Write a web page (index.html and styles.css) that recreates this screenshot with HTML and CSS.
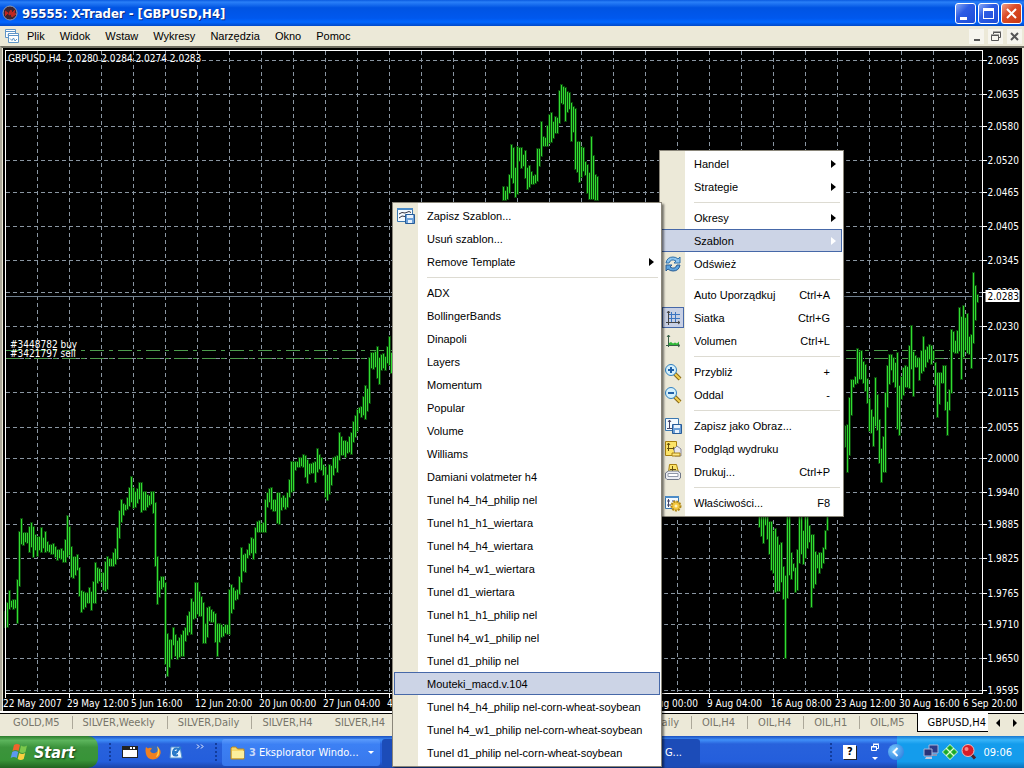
FILE: index.html
```
<!DOCTYPE html>
<html lang="pl">
<head>
    <meta charset="UTF-8">
    <meta name="viewport" content="width=device-width, initial-scale=1.0">
    <title>95555: X-Trader - [GBPUSD,H4]</title>
    <link rel="stylesheet" href="styles.css">
</head>
<body>
    <div class="desktop">
        <!-- Title bar -->
        <header class="titlebar">
            <svg class="app-icon" width="16" height="16" viewBox="0 0 16 16">
                <circle cx="8" cy="8" r="7" fill="#3c2430" stroke="#8c9cb8"/>
                <path d="M3 6l3 2-3 3M7 8l2-3 1 3 3-3-1 3 2 1-4 3-1-3-2 1z" fill="#c02820" stroke="#c02820"/>
            </svg>
            <h1>95555: X-Trader - [GBPUSD,H4]</h1>
            <div class="window-buttons">
                <button type="button" aria-label="Minimalizuj"><svg width="19" height="19"><path d="M4 13h7v3H4z" fill="#fff"/></svg></button>
                <button type="button" aria-label="Maksymalizuj"><svg width="19" height="19"><path d="M4 4h11v11H4zM5 7v7h9V7z" fill="#fff" fill-rule="evenodd"/></svg></button>
                <button type="button" class="close" aria-label="Zamknij"><svg width="19" height="19"><path d="M5 5l9 9M14 5l-9 9" stroke="#fff" stroke-width="2"/></svg></button>
            </div>
        </header>

        <!-- Menu bar -->
        <nav class="menubar">
            <svg class="doc-icon" width="15" height="15" viewBox="0 0 15 15" fill="#fff" stroke="#5f95c8">
                <path d="M.5.5h10v8H.5zM.5 2.500h10"/>
                <path d="M2.500 6l2-1.500 2 1" fill="none"/>
                <path d="M3.500 4.500h10v9h-10zM3.500 6.500h10"/>
                <path d="M5 9.500l2 2 1.500-2.500 1.500 3 2-2" fill="none"/>
            </svg>
            <button type="button">Plik</button>
            <button type="button">Widok</button>
            <button type="button">Wstaw</button>
            <button type="button">Wykresy</button>
            <button type="button">Narzędzia</button>
            <button type="button">Okno</button>
            <button type="button">Pomoc</button>
            <div class="mdi-buttons">
                <button type="button" aria-label="Minimalizuj wykres"><svg width="15" height="15"><path d="M5 10h6v2H5z" fill="#555"/></svg></button>
                <button type="button" aria-label="Przywróć wykres"><svg width="15" height="15" fill="none" stroke="#555"><path d="M5.500 5V3.500h7v5H11M5 3h8M3.500 6.500h7v5h-7zM3 6h8"/></svg></button>
                <button type="button" aria-label="Zamknij wykres"><svg width="15" height="15"><path d="M4 4l7 7M11 4l-7 7" stroke="#555" stroke-width="2"/></svg></button>
            </div>
        </nav>

        <!-- Chart -->
        <main class="chart">
            <svg id="chart"></svg>
        </main>

        <!-- Chart tabs -->
        <div class="tabs">
            <div class="tab-group">
                <button type="button">GOLD,M5</button>
                <button type="button">SILVER,Weekly</button>
                <button type="button">SILVER,Daily</button>
                <button type="button">SILVER,H4</button>
                <button type="button">SILVER,H4</button>
            </div>
            <div class="tab-group">
                <button type="button">OIL,Daily</button>
                <button type="button">OIL,H4</button>
                <button type="button">OIL,H4</button>
                <button type="button">OIL,H1</button>
                <button type="button">OIL,M5</button>
                <button type="button" class="active">GBPUSD,H4</button>
            </div>
            <div class="tab-scroll">
                <button type="button" aria-label="W lewo"><svg width="6" height="8"><path d="M5 0v8L1 4z"/></svg></button>
                <button type="button" aria-label="W prawo"><svg width="6" height="8"><path d="M1 0v8l4-4z"/></svg></button>
            </div>
        </div>

        <!-- Taskbar -->
        <footer class="taskbar">
            <button type="button" class="start">
                <svg width="20" height="18" viewBox="0 0 20 18">
                    <path d="M4 2q3-2 6 0L8.500 8q-3-2-6 0z" fill="#f0642c"/>
                    <path d="M11 2.500q3 2 6 0L15.500 9q-3 2-6 0z" fill="#7cc84c"/>
                    <path d="M2.200 9q3-2 6 0L6.700 15q-3-2-6 0z" fill="#5c98f0"/>
                    <path d="M9.200 10q3 2 6 0l-1.500 6q-3 2-6 0z" fill="#fcd040"/>
                </svg>
                <span>Start</span>
            </button>
            <span class="grip"></span>
            <div class="quick">
                <button type="button" aria-label="Okno"><svg width="16" height="16"><path d="M0 2h16v12H0z" fill="#222"/><path d="M1 6h14v7H1z" fill="#fff"/><path d="M8 3h2v2H8zM11 3h2v2h-2z" fill="#fff"/></svg></button>
                <button type="button" aria-label="Firefox">
                    <svg width="16" height="16" viewBox="0 0 16 16">
                        <circle cx="8.500" cy="7.500" r="6" fill="#3468c0"/>
                        <path d="M1 3l2 1.500Q5 3 7 4.500L5 7q2 3 5 2 4-1 3-6 4 4 2 8-2 4-7 4.500Q2 15 1 10 0 6 1 3z" fill="#f08020"/>
                        <path d="M12 2q3 3 2 7 0 3-3 4 3-5 1-11z" fill="#fcd048"/>
                    </svg>
                </button>
                <button type="button" aria-label="Outlook Express">
                    <svg width="16" height="16" viewBox="0 0 16 16">
                        <path d="M3 3h9l2 11H2z" fill="#e8f4ff" stroke="#5090d0"/>
                        <path d="M11 5q-5-2-6 3t5 3M6 11l7-8M6 8h4" fill="none" stroke="#2878c8" stroke-width="2"/>
                    </svg>
                </button>
            </div>
            <button type="button" class="more" aria-label="Więcej"><svg width="8" height="6" fill="none" stroke="#fff"><path d="M1 .5l2 2-2 2M5 .5l2 2-2 2"/></svg></button>
            <span class="grip"></span>
            <div class="tasks">
                <button type="button" class="task">
                    <svg width="16" height="14" viewBox="0 0 16 14"><path d="M1 2l1-1h4l1.500 2H14v10H1z" fill="#f8d868" stroke="#b88820"/><path d="M2 5h12v7H2z" fill="#fcee9c"/></svg>
                    <span class="count">3</span>
                    <span class="label">Eksplorator Windo...</span>
                    <svg width="6" height="4"><path d="M0 0h6L3 3z" fill="#fff"/></svg>
                </button>
                <button type="button" class="task pressed">
                    <svg width="16" height="16"><circle cx="8" cy="8" r="6" fill="#c06838"/></svg>
                    <span class="label">X-Trader - G...</span>
                </button>
            </div>
            <span class="grip"></span>
            <div class="language">
                <button type="button" class="help" aria-label="Pomoc">?</button>
                <svg width="10" height="18" fill="none" stroke="#fff"><path d="M3.500 3V1.500h5v4H7M3 1h6M1.500 3.500h5v4h-5zM1 4h6"/><path d="M2 14h6l-3 3z" fill="#fff" stroke="none"/></svg>
            </div>
            <div class="tray">
                <button type="button" class="tray-toggle" aria-label="Pokaż ukryte ikony"><svg width="16" height="16" fill="none" stroke="#fff" stroke-width="2"><path d="M9.500 4l-4 4 4 4"/></svg></button>
                <svg width="16" height="16" viewBox="0 0 16 16">
                    <path d="M6 1h9v8H6z" fill="#2c3c88" stroke="#a8b4d8"/><path d="M8 10h6v2H8z" fill="#8894b8"/>
                    <path d="M1 5h8v7H1z" fill="#283478" stroke="#a8b4d8"/><path d="M3 13h6v2H2z" fill="#c0c8dc"/>
                </svg>
                <svg width="16" height="16" viewBox="0 0 16 16">
                    <path d="M8 0l8 8-8 8-8-8z" fill="#d8ffd0"/>
                    <path d="M8 1.500l2.500 2.500L8 6.500 5.500 4zM12 5.500L14.500 8 12 10.500 9.500 8zM4 5.500L6.500 8 4 10.500 1.500 8zM8 9.500l2.500 2.500L8 14.500 5.500 12z" fill="#18a828" stroke="#18a828"/>
                </svg>
                <svg width="16" height="16" viewBox="0 0 16 16">
                    <path d="M10 10l4 4.500" stroke="#502028" stroke-width="3"/>
                    <circle cx="7" cy="6.500" r="6" fill="#d81c28" stroke="#f0b8b8"/>
                    <circle cx="5.500" cy="5" r="2" fill="#f88888"/>
                </svg>
                <time>09:06</time>
            </div>
        </footer>

        <!-- Chart context menu -->
        <ul class="menu context">
            <li><button type="button"><i></i><span>Handel</span><b class="arrow"></b></button></li>
            <li><button type="button"><i></i><span>Strategie</span><b class="arrow"></b></button></li>
            <li class="sep"></li>
            <li><button type="button"><i></i><span>Okresy</span><b class="arrow"></b></button></li>
            <li><button type="button" class="selected"><i></i><span>Szablon</span><b class="arrow"></b></button></li>
            <li><button type="button"><i><svg width="18" height="18" viewBox="0 0 18 18">
                <path d="M2 8q1-6 7-6 3 0 5 2l2-2v6H10l2-2Q7 3 5 8z" fill="#8cc4f0" stroke="#3070a8"/>
                <path d="M16 10q-1 6-7 6-3 0-5-2l-2 2v-6h6l-2 2q5 3 7-2z" fill="#5ca4e0" stroke="#285c94"/>
            </svg></i><span>Odśwież</span></button></li>
            <li class="sep"></li>
            <li><button type="button"><i></i><span>Auto Uporządkuj</span><kbd>Ctrl+A</kbd></button></li>
            <li><button type="button"><i class="checked"><svg width="18" height="18" viewBox="0 0 18 18" fill="none">
                <path d="M7.500 3v10M11.500 3v10M4 5.500h12M4 9.500h12" stroke="#3c74c0"/>
                <path d="M4.500 2v14M2 13.500h14M3 4l1.500-2L6 4M14 12l2 1.500-2 1.500" stroke="#444"/>
            </svg></i><span>Siatka</span><kbd>Ctrl+G</kbd></button></li>
            <li><button type="button"><i><svg width="18" height="18" viewBox="0 0 18 18">
                <path d="M5 13v-2l2-1 2 1.500 2-1 2 1 2-2v3.500z" fill="#30b838"/>
                <path d="M4.500 3v12M2 13.500h13M3 5l1.500-2L6 5M14 12l2 1.500-2 1.500" fill="none" stroke="#386048"/>
            </svg></i><span>Volumen</span><kbd>Ctrl+L</kbd></button></li>
            <li class="sep"></li>
            <li><button type="button"><i><svg width="18" height="18" viewBox="0 0 18 18">
                <path d="M10 10l6 6" stroke="#886818" stroke-width="4"/><path d="M11 11l5 5" stroke="#f4d050" stroke-width="2"/>
                <circle cx="7" cy="7" r="5.500" fill="#d4f0fc" stroke="#3080c0"/><path d="M4 7h6M7 4v6" stroke="#2060a8" stroke-width="2"/>
            </svg></i><span>Przybliż</span><kbd>+</kbd></button></li>
            <li><button type="button"><i><svg width="18" height="18" viewBox="0 0 18 18">
                <path d="M10 10l6 6" stroke="#886818" stroke-width="4"/><path d="M11 11l5 5" stroke="#f4d050" stroke-width="2"/>
                <circle cx="7" cy="7" r="5.500" fill="#d4f0fc" stroke="#3080c0"/><path d="M4 7h6" stroke="#2060a8" stroke-width="2"/>
            </svg></i><span>Oddal</span><kbd>-</kbd></button></li>
            <li class="sep"></li>
            <li><button type="button"><i><svg width="18" height="18" viewBox="0 0 18 18">
                <path d="M1.500 1.500h13v12h-13z" fill="#f4faff" stroke="#3c78b0"/>
                <path d="M5.500 3v9M4 5l1.500-2L7 5M3 11.500h5" fill="none" stroke="#446"/>
                <path d="M8.500 7.500h9v9h-9z" fill="#6ca0d8" stroke="#285c98"/><path d="M10 8h6v3h-6zM11 13h4v3h-4z" fill="#e8f2fc"/>
            </svg></i><span>Zapisz jako Obraz...</span></button></li>
            <li><button type="button"><i><svg width="18" height="18" viewBox="0 0 18 18">
                <path d="M1.500 1.500h11v14h-11z" fill="#fce468" stroke="#a88010"/>
                <path d="M4.500 3v8M3 8.500h8M3 5l1.500-2L6 5M9 7l2 1.500L9 10" fill="none" stroke="#665010"/>
                <path d="M10 9l3-3 4 3v7h-6z" fill="#e8e8f0" stroke="#888898"/><path d="M8 13h8v3H8z" fill="#fce888" stroke="#a88010"/>
            </svg></i><span>Podgląd wydruku</span></button></li>
            <li><button type="button"><i><svg width="18" height="18" viewBox="0 0 18 18">
                <path d="M5.500 1.500h7l2 8h-10z" fill="#fce468" stroke="#a88010"/><path d="M8.500 3v5M6 6.500h6" stroke="#665010"/>
                <path d="M1.500 10l3-2h9l3 2v5l-2 1.500H3L1.500 15z" fill="#eceef4" stroke="#707888"/><path d="M4 10.500h10v3H4z" fill="#fff" stroke="#9098a8"/>
            </svg></i><span>Drukuj...</span><kbd>Ctrl+P</kbd></button></li>
            <li class="sep"></li>
            <li><button type="button"><i><svg width="18" height="18" viewBox="0 0 18 18">
                <path d="M1.500 2.500h13v12h-13z" fill="#f4faff" stroke="#3c78b0"/><path d="M1 2h14v2H1z" fill="#4c8cc8"/>
                <path d="M4.500 5v8M3 7h3M3 11h4M8 7h3" stroke="#446"/>
                <circle cx="12" cy="12" r="4.500" fill="#f4c840" stroke="#b08818" stroke-width="2" stroke-dasharray="2 1"/><circle cx="12" cy="12" r="1.500" fill="#fff4c0"/>
            </svg></i><span>Właściwości...</span><kbd>F8</kbd></button></li>
        </ul>

        <!-- Template submenu -->
        <ul class="menu templates">
            <li><button type="button"><i><svg width="18" height="18" viewBox="0 0 18 18">
                <path d="M.5 1.500h15v13H.5z" fill="#f4faff" stroke="#3c78b0"/><path d="M0 1h16v2H0z" fill="#4c8cc8"/>
                <path d="M2 7l3-1.500L8 6l4-1.500 2 1M2 11l3-2 3 .5" fill="none" stroke="#334"/>
                <path d="M8.500 7.500h9v9h-9z" fill="#6ca0d8" stroke="#285c98"/><path d="M10 8h6v3h-6zM11 13h4v3h-4z" fill="#e8f2fc"/>
            </svg></i><span>Zapisz Szablon...</span></button></li>
            <li><button type="button"><i></i><span>Usuń szablon...</span></button></li>
            <li><button type="button"><i></i><span>Remove Template</span><b class="arrow"></b></button></li>
            <li class="sep"></li>
            <li><button type="button"><i></i><span>ADX</span></button></li>
            <li><button type="button"><i></i><span>BollingerBands</span></button></li>
            <li><button type="button"><i></i><span>Dinapoli</span></button></li>
            <li><button type="button"><i></i><span>Layers</span></button></li>
            <li><button type="button"><i></i><span>Momentum</span></button></li>
            <li><button type="button"><i></i><span>Popular</span></button></li>
            <li><button type="button"><i></i><span>Volume</span></button></li>
            <li><button type="button"><i></i><span>Williams</span></button></li>
            <li><button type="button"><i></i><span>Damiani volatmeter h4</span></button></li>
            <li><button type="button"><i></i><span>Tunel h4_h4_philip nel</span></button></li>
            <li><button type="button"><i></i><span>Tunel h1_h1_wiertara</span></button></li>
            <li><button type="button"><i></i><span>Tunel h4_h4_wiertara</span></button></li>
            <li><button type="button"><i></i><span>Tunel h4_w1_wiertara</span></button></li>
            <li><button type="button"><i></i><span>Tunel d1_wiertara</span></button></li>
            <li><button type="button"><i></i><span>Tunel h1_h1_philip nel</span></button></li>
            <li><button type="button"><i></i><span>Tunel h4_w1_philip nel</span></button></li>
            <li><button type="button"><i></i><span>Tunel d1_philip nel</span></button></li>
            <li><button type="button" class="selected"><i></i><span>Mouteki_macd.v.104</span></button></li>
            <li><button type="button"><i></i><span>Tunel h4_h4_philip nel-corn-wheat-soybean</span></button></li>
            <li><button type="button"><i></i><span>Tunel h4_w1_philip nel-corn-wheat-soybean</span></button></li>
            <li><button type="button"><i></i><span>Tunel d1_philip nel-corn-wheat-soybean</span></button></li>
        </ul>
    </div>

    <script src="chart.js"></script>
</body>
</html>
```

FILE: styles.css
```
* {
    box-sizing: border-box;
}
body {
    margin: 0;
    font-family: "Liberation Sans", Arial, sans-serif;
    font-size: 11px;
    color: #000;
    background-color: #ece9d8;
}
button {
    margin: 0;
    padding: 0;
    border: 0;
    background: none;
    font: inherit;
    color: inherit;
    white-space: nowrap;
}
svg {
    display: block;
    flex-shrink: 0;
}
.desktop {
    position: relative;
    display: flex;
    flex-direction: column;
    height: 100vh;
    overflow: hidden;
}

/* Title bar */
.titlebar {
    display: flex;
    align-items: center;
    gap: 4px;
    height: 26px;
    padding: 0 2px;
    background: linear-gradient(#0a5ae0, #2a80f8 8%, #0054e3 30%, #0058ee 70%, #0066ff 85%, #0048c8);
}
.titlebar h1 {
    flex: 1;
    margin: 0;
    font-family: "DejaVu Sans Condensed", "DejaVu Sans", sans-serif;
    font-size: 13px;
    font-weight: bold;
    color: #fff;
    text-shadow: 1px 1px #0a2a80;
}
.window-buttons {
    display: flex;
    gap: 2px;
}
.window-buttons button {
    width: 21px;
    height: 21px;
    border: 1px solid #fff;
    border-radius: 3px;
    background: linear-gradient(135deg, #88a8f4, #2c5ce4 40%, #1c4cd8);
}
.window-buttons .close {
    background: linear-gradient(135deg, #f0a088, #dc4c28 40%, #c83810);
}

/* Menu bar */
.menubar {
    display: flex;
    align-items: center;
    gap: 15px;
    height: 20px;
    padding: 0 2px 0 5px;
    background: #ece9d8;
}
.doc-icon {
    margin-right: -8px;
}
.mdi-buttons {
    display: flex;
    gap: 4px;
    margin-left: auto;
}
.mdi-buttons button {
    background: #f6f5ee;
}

/* Chart */
.chart {
    flex: 1;
    min-height: 0;
    padding: 0 2px 0 1px;
    border-top: 2px solid #716f64;
    border-left: 2px solid #aca899;
    background: #ece9d8;
}
.chart svg {
    width: 100%;
    height: 100%;
    background: #000;
    font-family: "DejaVu Sans Condensed", "DejaVu Sans", sans-serif;
    font-size: 10px;
}
.chart text {
    fill: #fff;
}
.grid {
    stroke: #8a96a2;
    stroke-dasharray: 4 3;
}
.frame {
    fill: none;
    stroke: #fff;
}
.bars {
    fill: #32dc32;
    stroke: #0a460a;
    stroke-width: 2px;
    paint-order: stroke;
}
.orders {
    stroke: #4c9c4c;
    stroke-dasharray: 14 5 4 5;
}
.price-line {
    stroke: #70808f;
}
.price-tag {
    fill: #fff;
}
.chart .price-now {
    fill: #000;
}

/* Tabs */
.tabs {
    display: flex;
    justify-content: space-between;
    height: 25px;
    padding: 0 6px 4px 3px;
    border-top: 2px solid #fff;
    background: #ece9d8;
    box-shadow: inset 0 1px #000;
    font-family: "DejaVu Sans Condensed", "DejaVu Sans", sans-serif;
    color: #77756a;
}
.tab-group {
    display: flex;
    align-items: center;
}
.tab-group:nth-child(2) {
    margin-left: auto;
}
.tab-group button {
    padding: 0 12px 0 10px;
    border-right: 1px solid #aca899;
}
.tab-group button:nth-last-child(2) {
    border-right: 0;
}
.tab-group .active {
    align-self: stretch;
    padding: 0 2px 0 10px;
    border: 1px solid #000;
    border-top: 0;
    border-right: 0;
    background: #fff;
    color: #000;
}
.tab-scroll {
    display: flex;
    align-items: center;
    gap: 11px;
    padding-left: 7px;
}

/* Taskbar */
.taskbar {
    display: flex;
    align-items: stretch;
    height: 32px;
    background: linear-gradient(#1c50c0, #4090f8 12%, #2862dc 25%, #245edc 80%, #1c44a8);
    font-family: "DejaVu Sans Condensed", "DejaVu Sans", sans-serif;
    color: #fff;
}
.start {
    display: flex;
    align-items: center;
    gap: 4px;
    width: 98px;
    padding-left: 10px;
    border-radius: 0 10px 10px 0;
    background: linear-gradient(#2c7c2c, #5cb45c 14%, #3c943c 35%, #389438 75%, #206420);
    font-size: 16px;
    font-weight: bold;
    font-style: italic;
    text-shadow: 1px 1px 2px #143814;
}
.grip {
    width: 4px;
    margin: 6px 10px;
    background: radial-gradient(circle, #123c9c 1px, transparent 1px) 0 0 / 4px 4px;
}
.quick {
    display: flex;
    align-items: center;
    gap: 7px;
}
.more {
    margin-left: 12px;
    padding-top: 8px;
    align-self: flex-start;
}
.tasks {
    display: flex;
    flex: 1;
    gap: 2px;
    padding: 3px 0 2px;
}
.grip + .tasks {
    margin-left: -6px;
}
.task {
    display: flex;
    align-items: center;
    gap: 3px;
    width: 158px;
    padding: 0 6px 0 8px;
    border-radius: 3px;
    background: linear-gradient(#5c9cfc, #3c80f4 20%, #3878ec);
}
.task .count {
    font-weight: bold;
    color: #c8d8f8;
}
.task .label {
    flex: 1;
    text-align: left;
}
.pressed {
    flex: 1;
    max-width: 318px;
    background: #1c4cb8;
}
.pressed .label {
    text-align: right;
    padding-right: 12px;
}
.language {
    display: flex;
    align-items: center;
    gap: 14px;
    padding-right: 8px;
}
.help {
    width: 13px;
    height: 14px;
    background: #fff;
    box-shadow: 1px 1px #222;
    font-weight: bold;
    line-height: 14px;
    color: #000;
}
.tray {
    display: flex;
    align-items: center;
    gap: 3px;
    padding-right: 12px;
    background: linear-gradient(#1878d0, #38b4f8 12%, #149cec 25%, #149cec 80%, #0c70b8);
    background-position: 9px 0;
    background-repeat: no-repeat;
}
.tray time {
    margin-left: 3px;
}
.tray-toggle {
    margin-right: 16px;
    border-radius: 50%;
    background: radial-gradient(circle at 35% 35%, #78c8fc, #2070d8);
}

/* Popup menus */
.menu {
    position: absolute;
    margin: 0;
    padding: 1px 1px 2px;
    list-style: none;
    border: 1px solid #8a867a;
    background: linear-gradient(90deg, #ece9d8 25px, #fff 25px);
    box-shadow: 2px 2px 2px rgba(0, 0, 0, 0.5);
}
.menu button {
    display: flex;
    align-items: center;
    width: 100%;
    height: 23px;
    border: 1px solid transparent;
    text-align: left;
}
.menu i {
    display: flex;
    align-items: center;
    justify-content: center;
    flex-shrink: 0;
    width: 22px;
    height: 21px;
    margin-right: 10px;
}
.menu i.checked {
    border: 1px solid #4668a8;
    background: #c8d0e4;
}
.menu span {
    flex: 1;
}
.menu kbd {
    margin-right: 11px;
    font: inherit;
}
.menu .sep {
    height: 1px;
    margin: 4px 2px 3px 33px;
    background: #dddbd2;
}
.menu .selected {
    border-color: #4668a8;
    background: #ccd4e6;
}
.arrow {
    margin-right: 5px;
    border: 4px solid transparent;
    border-right: 0;
    border-left: 5px solid #000;
}
.selected .arrow {
    border-left-color: #fff;
}
.context {
    top: 150px;
    left: 659px;
    width: 185px;
}
.templates {
    top: 202px;
    left: 392px;
    width: 270px;
}
```

FILE: chart.js
```
// Bars are [first slot, base offset, [high, low, high, low, ...]],
// one slot is 2px wide, values are in thirds of a pixel below the base
const runs = [
    [0, 272, [
        875,922, 850,920, 813,868, 843,862, 841,866, 841,865, 780,908, 635,798, 598,672, 640,675,
        640,665, 638,668, 620,697, 608,680, 620,710, 645,690, 650,708, 652,690, 625,695, 655,685,
        637,697, 665,693, 675,697, 675,703, 672,702, 680,712, 690,720, 690,715, 687,717, 692,727,
        660,727, 588,710, 620,705, 682,770, 710,775, 712,765, 706,750, 745,828, 812,876, 816,866,
        818,862, 818,850, 803,850, 815,870, 785,848, 728,848, 743,790, 748,782, 758,785, 758,810,
        725,813, 712,808, 718,738, 718,738, 700,738, 688,732, 625,718, 573,655, 540,605, 552,585,
        555,570, 535,567, 505,557, 472,545, 505,565, 515,560, 507,550, 490,537, 488,575, 515,570,
        515,570, 525,562, 528,555, 517,552, 515,580, 548,738, 712,852, 782,830, 770,806, 772,800,
        788,1032, 942,1068, 960,1042, 960,1018, 925,975, 945,1008, 962,1018, 955,1012, 945,1008, 932,1008,
        925,962, 888,945, 875,935, 838,943, 845,898, 788,895, 788,882, 815,888, 832,888, 848,968,
        912,970, 865,950, 862,902, 870,905, 875,905, 882,965, 912,1008, 912,965, 915,950, 920,948,
        915,938, 915,942, 810,942, 795,878, 805,868, 812,840, 810,838, 772,822, 685,785, 705,752,
        703,755, 690,715, 672,705, 655,700, 657,718, 625,700, 605,635, 603,635, 612,637, 608,637,
        540,635, 518,560, 508,545, 505,568, 540,573, 540,573, 518,610, 518,612, 535,570, 528,560,
        535,568, 520,562, 480,530, 425,515, 425,513, 425,450, 425,440, 413,440, 413,437, 405,440,
        408,470, 420,490, 432,462, 432,460, 430,460, 425,487, 388,455, 405,448, 413,450, 435,465,
        440,530, 465,540, 435,522, 438,495, 413,465, 412,445, 408,457, 340,420, 350,405, 362,405,
        362,410, 365,398, 350,395, 338,402, 305,365, 287,350, 270,333, 265,278, 262,290, 230,285,
        198,297, 208,272, 115,250, 98,145, 98,148, 95,140, 80,175, 115,192, 105,150, 103,145,
        110,150, 80,130, 52,135, 100,160
    ]],
    [249, 22, [
        350,390, 362,390, 352,388, 315,368, 225,325, 235,340, 295,380, 230,372, 233,272, 235,293,
        255,288, 243,325, 295,358, 287,350, 305,343, 317,342, 315,340, 238,332, 238,288, 157,258,
        202,228, 203,227, 168,228, 135,218, 128,215, 155,203, 140,188, 145,188, 63,160, 45,98,
        52,103, 55,152, 65,125, 68,118, 98,213, 110,187, 117,298, 215,305, 217,335, 230,320,
        235,303, 275,315, 285,368, 308,388, 202,388, 258,388, 316,390, 320,390
    ]],
    [377, 212, [
        740,800, 740,828, 740,850, 740,795, 750,838, 787,882, 787,930, 812,938, 808,997, 830,993,
        855,992, 848,965, 922,1018, 948,1195, 770,1015, 760,945, 878,957, 912,933, 925,997, 870,990,
        760,908, 760,882, 812,912, 760,893, 765,865, 798,845, 825,1042, 825,985, 875,972, 885,925,
        880,938, 880,925, 865,908, 812,868, 750,810
    ]],
    [420, 212, [
        498,562, 495,635, 415,585, 360,465, 360,380, 352,372, 268,370, 275,357, 272,358, 305,370,
        315,393, 358,428, 418,512, 450,518, 472,557, 355,497, 405,510, 480,608, 567,665, 530,635,
        400,637, 318,440, 285,372, 285,330, 293,367, 310,382, 280,508, 378,525, 352,418, 325,405,
        318,380, 320,380, 258,383, 198,328, 275,408, 287,320, 293,320, 293,360, 272,340, 232,333,
        270,320, 260,305, 255,298, 258,313, 272,300, 308,375, 338,472, 338,432, 340,370, 318,370,
        318,450, 425,525, 390,450, 210,400, 215,275, 243,278, 213,278, 145,272, 170,357, 138,290,
        175,270, 162,280, 230,283, 225,323, 40,248, 78,180, 105,125
    ]]
];

const prices = ['2.0695', '2.0635', '2.0580', '2.0520', '2.0465', '2.0405', '2.0345', '2.0290', '2.0230', '2.0175',
    '2.0115', '2.0055', '2.0000', '1.9940', '1.9885', '1.9825', '1.9765', '1.9710', '1.9650', '1.9595'];

// [slot of 64px, label]
const times = [[0, '22 May 2007'], [1, '29 May 12:00'], [2, '5 Jun 16:00'], [3, '12 Jun 20:00'],
    [4, '20 Jun 00:00'], [5, '27 Jun 04:00'], [6, '4 Jul 08:00'], [10, '2 Aug 00:00'], [11, '9 Aug 04:00'],
    [12, '16 Aug 08:00'], [13, '23 Aug 12:00'], [14, '30 Aug 16:00'], [15, '6 Sep 20:00']];

const svg = document.getElementById('chart');

function priceY(price) {
    return Math.round(12 + (2.0695 - price) * 5727) + 0.5;
}

function drawChart() {
    const right = svg.clientWidth - 39.5;
    const bottom = svg.clientHeight - 17.5;
    let grid = '';
    let ticks = '';
    let labels = '';
    let bars = '';

    for (let x = 34.5; x < right; x += 32) {
        grid += `M${x} 3V${bottom}`;
    }
    prices.forEach(price => {
        const y = priceY(price);
        grid += `M3 ${y}H${right}`;
        ticks += `M${right} ${y}h4`;
        labels += `<text x="${right + 5}" y="${y + 3}">${price}</text>`;
    });
    times.forEach(([slot, time]) => {
        ticks += `M${2.5 + slot * 64} ${bottom}v4`;
        labels += `<text x="${slot * 64}" y="${bottom + 13}">${time}</text>`;
    });
    runs.forEach(([slot, base, values]) => {
        for (let i = 0; i < values.length; i += 2) {
            const x = 2 + slot * 2 + i;
            bars += `M${x} ${Math.round(base + values[i] / 3)}h1V${Math.round(base + values[i + 1] / 3)}h-1z`;
        }
    });

    svg.innerHTML = `
        <g shape-rendering="crispEdges">
            <path class="grid" d="${grid}"/>
            <path class="orders" d="M3 302.5H${right - 8}M3 310.5H${right - 8}"/>
            <path class="price-line" d="M3 248.5H${right}"/>
            <path class="bars" d="${bars}"/>
            <path class="frame" d="M2.5 2.5H${right}V${bottom}H2.5z${ticks}"/>
        </g>
        ${labels}
        <rect class="price-tag" x="${right + 3}" y="242" width="34" height="12"/>
        <text class="price-now" x="${right + 5}" y="252">2.0283</text>
        <text x="5" y="14">GBPUSD,H4 &#160;2.0280 2.0284 2.0274 2.0283</text>
        <text x="7" y="309">#3421797 sell</text>
        <text x="7" y="300">#3448782 buy</text>`;
}

drawChart();
window.addEventListener('resize', drawChart);
```
